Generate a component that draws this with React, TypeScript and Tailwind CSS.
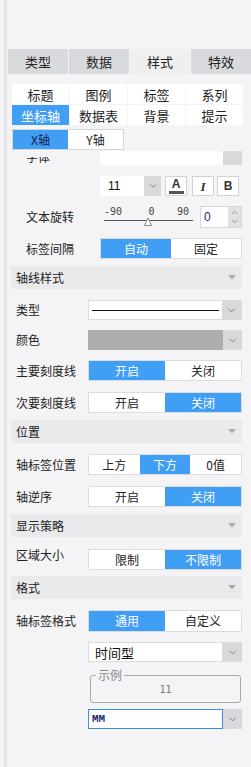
import { ChevronDown, ChevronUp } from "lucide-react"

const tabs = ["类型", "数据", "样式", "特效"]
const subTabs = ["标题", "图例", "标签", "系列", "坐标轴", "数据表", "背景", "提示"]

function Seg({ items, active }: { items: string[]; active: number }) {
  return (
    <div className="flex h-full flex-1 border border-[#dcdcdf] bg-white">
      {items.map((t, i) => (
        <div
          key={t}
          className={
            i === active
              ? "flex flex-1 items-center justify-center bg-[#419ef5] text-white"
              : "flex flex-1 items-center justify-center text-[#222]"
          }
        >
          {t}
        </div>
      ))}
    </div>
  )
}

function Arrow() {
  return (
    <div className="flex w-[19px] items-center justify-center bg-[#d9d9dc]">
      <ChevronDown size={11} strokeWidth={1.5} color="#555" />
    </div>
  )
}

function Header({ title }: { title: string }) {
  return (
    <div className="ml-[4px] flex h-[23px] w-[231px] items-center justify-between bg-[#eaeaec] pl-[5px] pr-[6px] text-[#222]">
      <span>{title}</span>
      <svg width="8" height="5" viewBox="0 0 8 5">
        <polygon points="0,0 8,0 4,4.5" fill="#adadb0" />
      </svg>
    </div>
  )
}

function Row({ label, h, mt, children, top }: { label: string; h: string; mt: string; children: React.ReactNode; top?: boolean }) {
  return (
    <div className={`ml-[4px] flex w-[231px] ${h} ${mt} ${top ? "items-start" : "items-center"}`}>
      <div className="w-[77px] shrink-0 pl-[5px] text-[#222]">{label}</div>
      {children}
    </div>
  )
}

export default function App() {
  return (
    <div className="flex h-[767px] w-[251px] overflow-hidden bg-[#f4f4f6] font-['Noto_Sans_CJK_SC',sans-serif] text-[12px] leading-none">
      <div className="w-[4px] shrink-0 bg-[#f4f4f6]" />
      <div className="w-[3px] shrink-0 bg-[#e4e4e7]" />
      <div className="flex min-w-0 flex-1 flex-col">
        <div className="h-[49px] shrink-0" />

        {/* main tabs */}
        <div className="ml-[1px] grid h-[25px] shrink-0 grid-cols-4 gap-px text-[13px]">
          {tabs.map((t, i) => (
            <div
              key={t}
              className={
                i === 2
                  ? "flex items-center justify-center bg-[#efeff2] text-[#222]"
                  : "flex items-center justify-center bg-[#d9dade] text-[#222]"
              }
            >
              {t}
            </div>
          ))}
        </div>

        {/* sub tabs */}
        <div className="ml-[5px] mt-[10px] grid w-[231px] shrink-0 grid-cols-4 grid-rows-2 gap-px text-[13px]">
          {subTabs.map((t, i) => (
            <div
              key={t}
              className={
                i === 4
                  ? "flex h-[20px] items-center justify-center bg-[#419ef5] text-white"
                  : "flex h-[20px] items-center justify-center bg-white text-[#222]"
              }
            >
              {t}
            </div>
          ))}
        </div>

        {/* axis switch */}
        <div className="ml-[5px] mt-[4px] flex h-[21px] w-[112px] shrink-0 border border-[#d6d6d9] bg-white text-[12px]">
          <div className="flex w-[55px] items-center justify-center bg-[#419ef5] text-[#15204a]">X轴</div>
          <div className="flex flex-1 items-center justify-center text-[#222]">Y轴</div>
        </div>

        {/* scrolling content */}
        <div className="mt-[1px] min-h-0 flex-1 overflow-hidden">
          <div className="-mt-[6px] flex flex-col">
            <div className="ml-[4px] flex h-[20px] w-[231px] items-center">
              <div className="flex h-full w-[89px] shrink-0 items-end pb-[2px] pl-[15px] text-[#222]">
                <div className="flex h-[6px] items-end overflow-hidden">
                  <span className="leading-[12px]">字体</span>
                </div>
              </div>
              <div className="flex h-full flex-1">
                <div className="flex-1 bg-white" />
                <div className="w-[19px] bg-[#d9d9dc]" />
              </div>
            </div>

            {/* font style row */}
            <div className="ml-[93px] mt-[11px] flex h-[20px] items-center">
              <div className="flex h-full w-[61px] bg-white">
                <div className="flex flex-1 items-center pl-[8px] font-['Liberation_Sans',sans-serif] text-[12px] text-[#111]">11</div>
                <div className="flex w-[17px] items-center justify-center bg-[#d9d9dc]">
                  <ChevronDown size={10} strokeWidth={1.5} color="#555" />
                </div>
              </div>
              <div className="ml-[4px] flex h-full w-[22px] flex-col items-center justify-center border border-[#d2d2d5] bg-white">
                <span className="font-['Liberation_Sans',sans-serif] text-[12px] font-bold leading-[11px] text-[#333]">A</span>
                <div className="mt-[1px] h-[3px] w-[15px] bg-[#555]" />
              </div>
              <div className="ml-[5px] flex h-full w-[22px] items-center justify-center border border-[#d2d2d5] bg-white font-['Liberation_Serif',serif] text-[13px] font-bold italic text-[#333]">
                I
              </div>
              <div className="ml-[3px] flex h-full w-[22px] items-center justify-center border border-[#d2d2d5] bg-white font-['Liberation_Sans',sans-serif] text-[12px] font-bold text-[#333]">
                B
              </div>
            </div>

            {/* rotation */}
            <div className="ml-[4px] mt-[10px] flex h-[22px] w-[231px] items-center">
              <div className="w-[89px] shrink-0 pl-[15px] text-[#222]">文本旋转</div>
              <div className="ml-[4px] flex h-full w-[89px] flex-col">
                <div className="mt-[1px] flex h-[10px] justify-between pr-[4px] font-['DejaVu_Sans_Mono',monospace] text-[10px] leading-[10px] text-[#444]">
                  <span>-90</span>
                  <span className="ml-[4px]">0</span>
                  <span>90</span>
                </div>
                <svg width="89" height="11" viewBox="0 0 89 11">
                  <line x1="0" y1="3.5" x2="89" y2="3.5" stroke="#555" strokeWidth="1" />
                  <polygon points="44,1 40.5,8.5 47.5,8.5" fill="#fff" stroke="#888" strokeWidth="1" />
                </svg>
              </div>
              <div className="ml-[7px] flex h-full flex-1 border border-[#d6d6d9] bg-white">
                <div className="flex flex-1 items-center pl-[3px] font-['Liberation_Sans',sans-serif] text-[12px] text-[#1a2a80]">0</div>
                <div className="flex w-[13px] flex-col items-center justify-between bg-[#e1e1e4] py-[1px]">
                  <ChevronUp size={9} strokeWidth={1.5} color="#555" />
                  <ChevronDown size={9} strokeWidth={1.5} color="#555" />
                </div>
              </div>
            </div>

            <div className="ml-[4px] mt-[10px] flex h-[21px] w-[231px] items-center">
              <div className="w-[89px] shrink-0 pl-[15px] text-[#222]">标签间隔</div>
              <Seg items={["自动", "固定"]} active={0} />
            </div>

            <div className="mt-[7px]">
              <Header title="轴线样式" />
            </div>

            <Row label="类型" h="h-[20px]" mt="mt-[11px]">
              <div className="flex h-full flex-1 border border-[#dcdcdf] bg-white">
                <div className="flex flex-1 items-center px-[3px]">
                  <div className="h-px w-full bg-[#111]" />
                </div>
                <Arrow />
              </div>
            </Row>

            <Row label="颜色" h="h-[20px]" mt="mt-[10px]">
              <div className="flex h-full flex-1">
                <div className="flex-1 bg-[#adadad]" />
                <Arrow />
              </div>
            </Row>

            <Row label="主要刻度线" h="h-[21px]" mt="mt-[10px]">
              <Seg items={["开启", "关闭"]} active={0} />
            </Row>
            <Row label="次要刻度线" h="h-[21px]" mt="mt-[11px]">
              <Seg items={["开启", "关闭"]} active={1} />
            </Row>

            <div className="mt-[7px]">
              <Header title="位置" />
            </div>

            <Row label="轴标签位置" h="h-[21px]" mt="mt-[11px]">
              <Seg items={["上方", "下方", "0值"]} active={1} />
            </Row>
            <Row label="轴逆序" h="h-[21px]" mt="mt-[11px]">
              <Seg items={["开启", "关闭"]} active={1} />
            </Row>

            <div className="mt-[7px]">
              <Header title="显示策略" />
            </div>

            <Row label="区域大小" h="h-[21px]" mt="mt-[12px]" top>
              <Seg items={["限制", "不限制"]} active={1} />
            </Row>

            <div className="mt-[6px]">
              <Header title="格式" />
            </div>

            <Row label="轴标签格式" h="h-[22px]" mt="mt-[11px]">
              <Seg items={["通用", "自定义"]} active={0} />
            </Row>

            <div className="ml-[81px] mt-[10px] flex h-[20px] w-[154px]">
              <div className="flex flex-1 items-center border border-[#dcdcdf] bg-white pl-[6px] text-[13px] text-[#111]">时间型</div>
              <Arrow />
            </div>

            <fieldset className="ml-[83px] mt-[7px] h-[34px] w-[151px] rounded-[3px] border border-[#a9a9ab] px-[4px]">
              <legend className="ml-[1px] px-[2px] text-[12px] leading-[12px] text-[#8a8a8a]">示例</legend>
              <div className="flex h-[18px] items-center justify-center font-['DejaVu_Sans_Mono',monospace] text-[10px] text-[#777]">11</div>
            </fieldset>

            <div className="ml-[81px] mt-[6px] flex h-[20px] w-[154px]">
              <div className="flex flex-1 items-center border border-[#3b8ee8] bg-white pl-[3px] font-['Liberation_Mono',monospace] text-[11px] font-bold text-[#1a2a70]">
                MM
              </div>
              <Arrow />
            </div>
          </div>
        </div>
      </div>
    </div>
  )
}
